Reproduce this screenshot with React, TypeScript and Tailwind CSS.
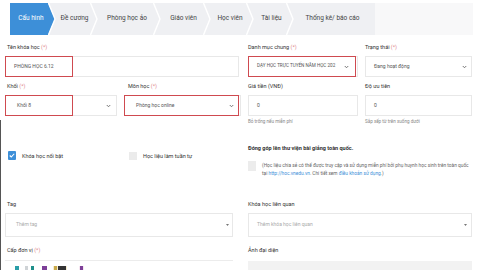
import React from 'react';

const tabs = [
  { label: 'Cấu hình', w: 'w-[45px]' },
  { label: 'Đề cương', w: 'w-[42px]' },
  { label: 'Phòng học ảo', w: 'w-[63px]' },
  { label: 'Giáo viên', w: 'w-[50px]' },
  { label: 'Học viên', w: 'w-[43px]' },
  { label: 'Tài liệu', w: 'w-[40px]' },
  { label: 'Thống kê/ báo cáo', w: 'w-[82px]' },
];

const Chevron = () => (
  <svg width="5" height="4" viewBox="0 0 10 7" className="shrink-0">
    <path d="M1.5 1.5l3.5 3.5 3.5-3.5" stroke="#666" strokeWidth="1.8" fill="none" />
  </svg>
);

const Caret = () => (
  <svg width="3" height="2" viewBox="0 0 6 4" className="shrink-0">
    <path d="M0 0h6L3 4z" fill="#777" />
  </svg>
);

const Label = ({ text, req, bold }: { text: string; req?: boolean; bold?: boolean }) => (
  <div className={`h-[9px] leading-[9px] text-[5.5px] text-[#333] whitespace-nowrap ${bold ? 'font-bold' : ''}`}>
    {text}
    {req && <span className="text-[#e0898c]"> (*)</span>}
  </div>
);

const Box = ({ children, className = '' }: { children?: React.ReactNode; className?: string }) => (
  <div className={`relative mt-[4px] h-[21px] border border-[#e8e8e8] bg-white flex items-center justify-between px-[8px] text-[5px] text-[#555] ${className}`}>
    {children}
  </div>
);

const Red = ({ className = 'w-full' }: { className?: string }) => (
  <div className={`absolute -left-px -top-px h-[calc(100%+2px)] border border-[#cf4a50] ${className}`} />
);

export default function App() {
  return (
    <div className="relative w-[480px] h-[270px] bg-white overflow-hidden font-['Roboto','Liberation_Sans',sans-serif]">
      <div className="absolute left-0 top-[120px] bottom-0 w-px bg-[#555]" />

      {/* tabs */}
      <div className="flex h-[32px] mt-[3px] ml-[10px] w-[463px]">
        <div className="flex bg-[#eff0f3]">
          {tabs.map((t, i) => (
            <div key={t.label} className={`relative ${t.w} h-full flex items-center justify-center text-[6.5px] whitespace-nowrap`}>
              {i === 0 ? (
                <div className="absolute inset-0 bg-[#3d8fd8] [clip-path:polygon(0_0,calc(100%_-_7px)_0,100%_50%,calc(100%_-_7px)_100%,0_100%)]" />
              ) : (
                <svg className="absolute left-[-7px] top-0" width="8" height="32" viewBox="0 0 8 32">
                  <polyline points="0.5,0 7,16 0.5,32" fill="none" stroke="#ffffff" strokeWidth="1.4" />
                </svg>
              )}
              <span className={`relative pr-[3px] ${i === 0 ? 'text-white' : 'text-[#444]'}`}>{t.label}</span>
            </div>
          ))}
        </div>
        <div className="flex-1 bg-[#f8f8f9]" />
      </div>

      {/* form */}
      <div className="px-[5px] pt-[8px] grid grid-cols-[112px_117px_110px_107px] gap-x-[7px]">
        {/* row 1 */}
        <div className="col-span-2 pr-[2px]">
          <div className="pl-[2px]"><Label text="Tên khóa học" req /></div>
          <Box className="justify-start">
            <Red className="w-[68px]" />
            <span>PHÒNG HỌC 6.12</span>
          </Box>
        </div>
        <div>
          <Label text="Danh mục chung" req />
          <Box className="px-[6px]">
            <Red />
            <span className="whitespace-nowrap text-[4.6px]">DẠY HỌC TRỰC TUYẾN NĂM HỌC 202</span>
            <Chevron />
          </Box>
        </div>
        <div>
          <Label text="Trạng thái" req />
          <Box className="pr-[4px]">
            <span>Đang hoạt động</span>
            <Chevron />
          </Box>
        </div>

        {/* row 2 */}
        <div className="mt-[5px]">
          <div className="pl-[2px]"><Label text="Khối" req /></div>
          <Box className="pr-[5px]">
            <Red className="w-[68px]" />
            <span className="pl-[3px]">Khối 8</span>
            <Chevron />
          </Box>
        </div>
        <div className="mt-[5px]">
          <div className="pl-[4px]"><Label text="Môn học" req /></div>
          <Box className="pr-[6px]">
            <Red />
            <span className="pl-[3px]">Phòng học online</span>
            <Chevron />
          </Box>
        </div>
        <div className="mt-[5px]">
          <Label text="Giá tiền (VNĐ)" />
          <Box className="justify-start"><span>0</span></Box>
          <div className="mt-[3px] text-[4.6px] text-[#888] whitespace-nowrap">Bỏ trống nếu miễn phí</div>
        </div>
        <div className="mt-[5px]">
          <Label text="Độ ưu tiên" />
          <Box className="justify-start"><span>0</span></Box>
          <div className="mt-[3px] text-[4.6px] text-[#888] whitespace-nowrap">Sắp xếp từ trên xuống dưới</div>
        </div>

        {/* row 3 */}
        <div className="mt-[25px] flex items-center gap-[6px] pl-[3px] h-[10px]">
          <div className="w-[8px] h-[9px] bg-[#3d8fd8] flex items-center justify-center rounded-[1px]">
            <svg width="6" height="5" viewBox="0 0 12 10">
              <path d="M1.5 5l3 3 6-6.5" stroke="#fff" strokeWidth="2.2" fill="none" />
            </svg>
          </div>
          <span className="text-[5.5px] text-[#333] whitespace-nowrap">Khóa học nổi bật</span>
        </div>
        <div className="mt-[25px] flex items-center gap-[6px] pl-[5px] h-[10px]">
          <div className="w-[8px] h-[8px] bg-[#ebebeb]" />
          <span className="text-[5.5px] text-[#333] whitespace-nowrap">Học liệu làm tuần tự</span>
        </div>
        <div className="col-span-2 mt-[18px]">
          <Label text="Đóng góp lên thư viện bài giảng toàn quốc." bold />
          <div className="mt-[9px] flex gap-[6px]">
            <div className="w-[8px] h-[10px] bg-[#ececec] shrink-0 mt-[-1px]" />
            <p className="w-[216px] text-[4.8px] leading-[8px] text-[#666] whitespace-nowrap">
              (Học liệu chia sẻ có thể được truy cập và sử dụng miễn phí bởi phụ huynh học sinh trên toàn quốc
              <br />
              tại <span className="text-[#3d8fd8]">http://hoc.vnedu.vn</span>. Chi tiết xem{' '}
              <span className="text-[#3d8fd8]">điều khoản sử dụng</span>.)
            </p>
          </div>
        </div>

        {/* row 4 */}
        <div className="col-span-2 mt-[22px] pr-[8px]">
          <div className="pl-[2px]"><Label text="Tag" /></div>
          <Box className="h-[24px] mt-[3px] pr-[3px] text-[#aaa]">
            <span className="pl-[2px]">Thêm tag</span>
            <Caret />
          </Box>
        </div>
        <div className="col-span-2 mt-[22px]">
          <Label text="Khóa học liên quan" />
          <Box className="h-[24px] mt-[3px] pr-[4px] text-[#aaa]">
            <span>Thêm khóa học liên quan</span>
            <Caret />
          </Box>
        </div>

        {/* row 5 */}
        <div className="col-span-2 mt-[9px] pr-[8px]">
          <div className="pl-[2px]"><Label text="Cấp đơn vị" req /></div>
          <div className="mt-[5px] border-t border-[#ececec] pt-[5px] pl-[10px] flex items-center h-[12px]">
            <span className="w-[4px] h-[5px] bg-[#2a9ea8]" />
            <span className="ml-[6px] w-[3px] h-[5px] bg-[#cfd3d6]" />
            <span className="ml-[3px] w-[3px] h-[5px] bg-[#1f8f8a]" />
            <span className="ml-[8px] w-[5px] h-[5px] bg-[#7d3f98]" />
            <span className="ml-[6px] flex items-center gap-[1px] bg-[#f5ecd0] px-[1px]">
              <span className="w-[3px] h-[5px] bg-[#c9a94a]" />
              <span className="w-[8px] h-[5px] bg-[#333]" />
            </span>
            <span className="ml-[12px] flex items-center bg-[#f6e6f1] px-[1px]">
              <span className="w-[3px] h-[5px] bg-[#7d3f98]" />
            </span>
          </div>
        </div>
        <div className="col-span-2 mt-[9px]">
          <Label text="Ảnh đại diện" />
          <div className="mt-[6px] h-[20px] bg-[#f2f2f2]" />
        </div>
      </div>
    </div>
  );
}
